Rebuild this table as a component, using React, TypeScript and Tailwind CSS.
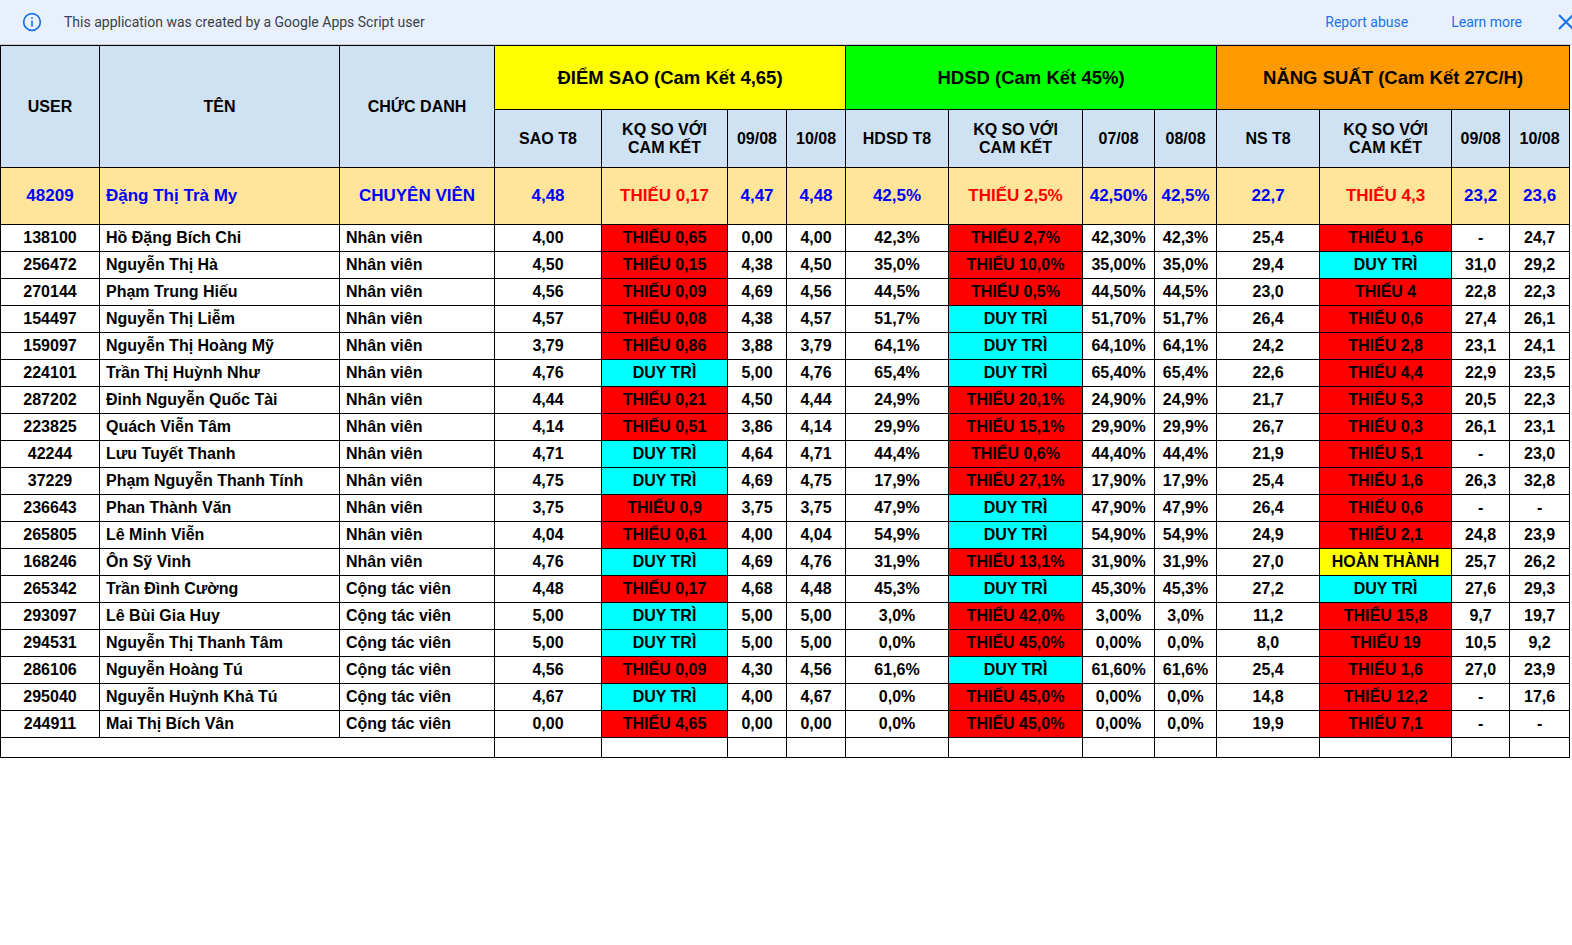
import React from 'react';

type Row = string[];

// user, name, role, sao, kq, 09/08, 10/08, hdsd, kq, 07/08, 08/08, ns, kq, 09/08, 10/08
const rows: Row[] = [
  ['138100', 'Hồ Đặng Bích Chi', 'Nhân viên', '4,00', 'THIẾU 0,65', '0,00', '4,00', '42,3%', 'THIẾU 2,7%', '42,30%', '42,3%', '25,4', 'THIẾU 1,6', '-', '24,7'],
  ['256472', 'Nguyễn Thị Hà', 'Nhân viên', '4,50', 'THIẾU 0,15', '4,38', '4,50', '35,0%', 'THIẾU 10,0%', '35,00%', '35,0%', '29,4', 'DUY TRÌ', '31,0', '29,2'],
  ['270144', 'Phạm Trung Hiếu', 'Nhân viên', '4,56', 'THIẾU 0,09', '4,69', '4,56', '44,5%', 'THIẾU 0,5%', '44,50%', '44,5%', '23,0', 'THIẾU 4', '22,8', '22,3'],
  ['154497', 'Nguyễn Thị Liễm', 'Nhân viên', '4,57', 'THIẾU 0,08', '4,38', '4,57', '51,7%', 'DUY TRÌ', '51,70%', '51,7%', '26,4', 'THIẾU 0,6', '27,4', '26,1'],
  ['159097', 'Nguyễn Thị Hoàng Mỹ', 'Nhân viên', '3,79', 'THIẾU 0,86', '3,88', '3,79', '64,1%', 'DUY TRÌ', '64,10%', '64,1%', '24,2', 'THIẾU 2,8', '23,1', '24,1'],
  ['224101', 'Trần Thị Huỳnh Như', 'Nhân viên', '4,76', 'DUY TRÌ', '5,00', '4,76', '65,4%', 'DUY TRÌ', '65,40%', '65,4%', '22,6', 'THIẾU 4,4', '22,9', '23,5'],
  ['287202', 'Đinh Nguyễn Quốc Tài', 'Nhân viên', '4,44', 'THIẾU 0,21', '4,50', '4,44', '24,9%', 'THIẾU 20,1%', '24,90%', '24,9%', '21,7', 'THIẾU 5,3', '20,5', '22,3'],
  ['223825', 'Quách Viễn Tâm', 'Nhân viên', '4,14', 'THIẾU 0,51', '3,86', '4,14', '29,9%', 'THIẾU 15,1%', '29,90%', '29,9%', '26,7', 'THIẾU 0,3', '26,1', '23,1'],
  ['42244', 'Lưu Tuyết Thanh', 'Nhân viên', '4,71', 'DUY TRÌ', '4,64', '4,71', '44,4%', 'THIẾU 0,6%', '44,40%', '44,4%', '21,9', 'THIẾU 5,1', '-', '23,0'],
  ['37229', 'Phạm Nguyễn Thanh Tính', 'Nhân viên', '4,75', 'DUY TRÌ', '4,69', '4,75', '17,9%', 'THIẾU 27,1%', '17,90%', '17,9%', '25,4', 'THIẾU 1,6', '26,3', '32,8'],
  ['236643', 'Phan Thành Văn', 'Nhân viên', '3,75', 'THIẾU 0,9', '3,75', '3,75', '47,9%', 'DUY TRÌ', '47,90%', '47,9%', '26,4', 'THIẾU 0,6', '-', '-'],
  ['265805', 'Lê Minh Viễn', 'Nhân viên', '4,04', 'THIẾU 0,61', '4,00', '4,04', '54,9%', 'DUY TRÌ', '54,90%', '54,9%', '24,9', 'THIẾU 2,1', '24,8', '23,9'],
  ['168246', 'Ôn Sỹ Vinh', 'Nhân viên', '4,76', 'DUY TRÌ', '4,69', '4,76', '31,9%', 'THIẾU 13,1%', '31,90%', '31,9%', '27,0', 'HOÀN THÀNH', '25,7', '26,2'],
  ['265342', 'Trần Đình Cường', 'Cộng tác viên', '4,48', 'THIẾU 0,17', '4,68', '4,48', '45,3%', 'DUY TRÌ', '45,30%', '45,3%', '27,2', 'DUY TRÌ', '27,6', '29,3'],
  ['293097', 'Lê Bùi Gia Huy', 'Cộng tác viên', '5,00', 'DUY TRÌ', '5,00', '5,00', '3,0%', 'THIẾU 42,0%', '3,00%', '3,0%', '11,2', 'THIẾU 15,8', '9,7', '19,7'],
  ['294531', 'Nguyễn Thị Thanh Tâm', 'Cộng tác viên', '5,00', 'DUY TRÌ', '5,00', '5,00', '0,0%', 'THIẾU 45,0%', '0,00%', '0,0%', '8,0', 'THIẾU 19', '10,5', '9,2'],
  ['286106', 'Nguyễn Hoàng Tú', 'Cộng tác viên', '4,56', 'THIẾU 0,09', '4,30', '4,56', '61,6%', 'DUY TRÌ', '61,60%', '61,6%', '25,4', 'THIẾU 1,6', '27,0', '23,9'],
  ['295040', 'Nguyễn Huỳnh Khả Tú', 'Cộng tác viên', '4,67', 'DUY TRÌ', '4,00', '4,67', '0,0%', 'THIẾU 45,0%', '0,00%', '0,0%', '14,8', 'THIẾU 12,2', '-', '17,6'],
  ['244911', 'Mai Thị Bích Vân', 'Cộng tác viên', '0,00', 'THIẾU 4,65', '0,00', '0,00', '0,0%', 'THIẾU 45,0%', '0,00%', '0,0%', '19,9', 'THIẾU 7,1', '-', '-'],
];

const widths = [99, 240, 155, 107, 126, 59, 59, 103, 134, 72, 62, 103, 132, 58, 60];
const tableWidth = widths.reduce((a, b) => a + b, 0);

function statusBg(v: string) {
  if (v.startsWith('THIẾU')) return 'bg-[#ff0000]';
  if (v === 'DUY TRÌ') return 'bg-[#00ffff]';
  if (v === 'HOÀN THÀNH') return 'bg-[#ffff00]';
  return '';
}

const kqCols = [4, 8, 12];

function Banner() {
  return (
    <div className="flex h-[45px] items-center border-b border-[#c8ccd2] bg-[#e8f0fe] font-['Roboto',sans-serif] text-[14px]">
      <svg className="ml-[22px] shrink-0" width="20" height="20" viewBox="0 0 24 24" fill="none">
        <circle cx="12" cy="12" r="10" stroke="#1a73e8" strokeWidth="2" />
        <rect x="11" y="10.5" width="2" height="7" fill="#1a73e8" />
        <rect x="11" y="6.5" width="2" height="2" fill="#1a73e8" />
      </svg>
      <span className="ml-[22px] text-[#3c4043]">This application was created by a Google Apps Script user</span>
      <div className="ml-auto flex items-center text-[#1a73e8]">
        <span>Report abuse</span>
        <span className="ml-[43px]">Learn more</span>
        <svg className="ml-[34px] mr-[-4px] shrink-0" width="20" height="20" viewBox="0 0 20 20">
          <path d="M3 3 L17 17 M17 3 L3 17" stroke="#1a73e8" strokeWidth="2" />
        </svg>
      </div>
    </div>
  );
}

export default function App() {
  const th = 'border border-black font-bold text-[16px] text-black';
  return (
    <div className="h-[945px] w-[1572px] overflow-hidden bg-white">
      <Banner />
      <table className="table-fixed border-collapse font-['Liberation_Sans',Arial,sans-serif]" style={{ width: tableWidth }}>
        <colgroup>
          {widths.map((w, i) => (
            <col key={i} style={{ width: w }} />
          ))}
        </colgroup>
        <thead>
          <tr className="h-[64px]">
            <th rowSpan={2} className={`${th} bg-[#cfe2f3]`}>USER</th>
            <th rowSpan={2} className={`${th} bg-[#cfe2f3]`}>TÊN</th>
            <th rowSpan={2} className={`${th} bg-[#cfe2f3]`}>CHỨC DANH</th>
            <th colSpan={4} className={`${th} bg-[#ffff00] text-[18.5px]`}>ĐIỂM SAO (Cam Kết 4,65)</th>
            <th colSpan={4} className={`${th} bg-[#00ff00] text-[18.5px]`}>HDSD (Cam Kết 45%)</th>
            <th colSpan={4} className={`${th} bg-[#ff9900] text-[18.5px]`}>NĂNG SUẤT (Cam Kết 27C/H)</th>
          </tr>
          <tr className="h-[58px] bg-[#cfe2f3]">
            <th className={th}>SAO T8</th>
            <th className={`${th} leading-[18px]`}>KQ SO VỚI<br />CAM KẾT</th>
            <th className={th}>09/08</th>
            <th className={th}>10/08</th>
            <th className={th}>HDSD T8</th>
            <th className={`${th} leading-[18px]`}>KQ SO VỚI<br />CAM KẾT</th>
            <th className={th}>07/08</th>
            <th className={th}>08/08</th>
            <th className={th}>NS T8</th>
            <th className={`${th} leading-[18px]`}>KQ SO VỚI<br />CAM KẾT</th>
            <th className={th}>09/08</th>
            <th className={th}>10/08</th>
          </tr>
        </thead>
        <tbody>
          <tr className="h-[57px] bg-[#ffe599] text-[17px] font-bold text-[#0000ff]">
            <td className="border border-black text-center">48209</td>
            <td className="border border-black pl-[6px] text-left">Đặng Thị Trà My</td>
            <td className="border border-black text-center">CHUYÊN VIÊN</td>
            <td className="border border-black text-center">4,48</td>
            <td className="border border-black text-center text-[#ff0000]">THIẾU 0,17</td>
            <td className="border border-black text-center">4,47</td>
            <td className="border border-black text-center">4,48</td>
            <td className="border border-black text-center">42,5%</td>
            <td className="border border-black text-center text-[#ff0000]">THIẾU 2,5%</td>
            <td className="border border-black text-center">42,50%</td>
            <td className="border border-black text-center">42,5%</td>
            <td className="border border-black text-center">22,7</td>
            <td className="border border-black text-center text-[#ff0000]">THIẾU 4,3</td>
            <td className="border border-black text-center">23,2</td>
            <td className="border border-black text-center">23,6</td>
          </tr>
          {rows.map((r) => (
            <tr key={r[0]} className="h-[27px] text-[16px] font-bold text-black">
              {r.map((v, i) => (
                <td
                  key={i}
                  className={`whitespace-nowrap border border-black p-0 leading-[18px] ${
                    i === 1 || i === 2 ? 'pl-[6px] text-left' : 'text-center'
                  } ${kqCols.includes(i) ? statusBg(v) : ''}`}
                >
                  {v}
                </td>
              ))}
            </tr>
          ))}
          <tr className="h-[20px]">
            <td colSpan={3} className="border border-black" />
            {widths.slice(3).map((_, i) => (
              <td key={i} className="border border-black" />
            ))}
          </tr>
        </tbody>
      </table>
    </div>
  );
}
